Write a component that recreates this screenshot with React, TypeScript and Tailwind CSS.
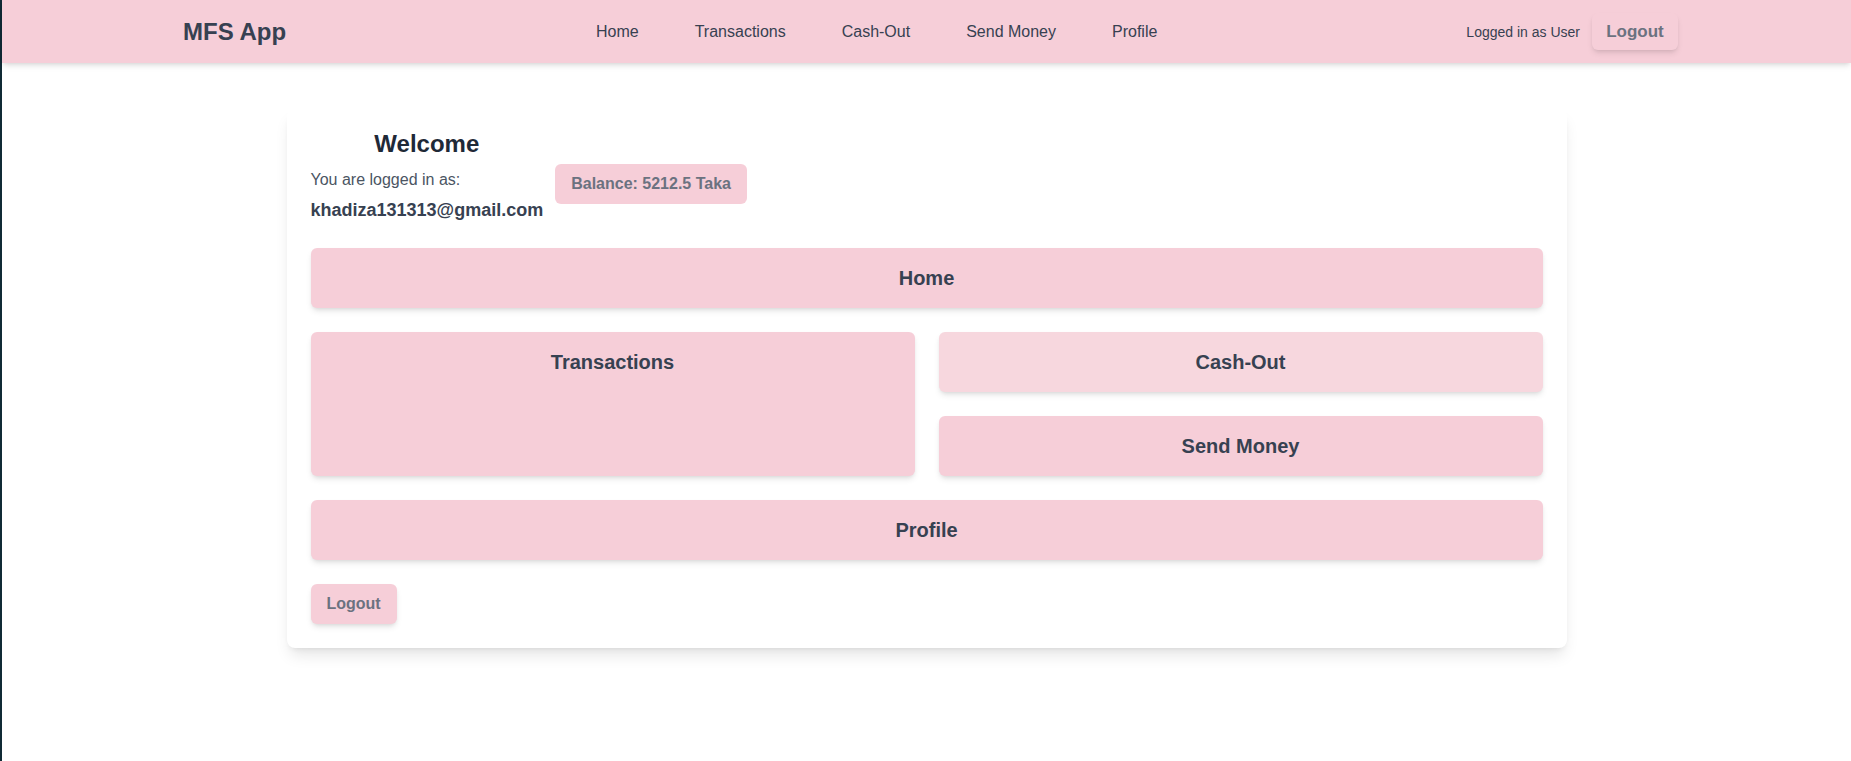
import React from "react";

const PINK = "bg-[#f6ced8]";

function Tile({ label, className = "" }: { label: string; className?: string }) {
  return (
    <div
      className={`rounded-md shadow-md py-4 text-center text-xl font-bold text-[#374151] ${className}`}
    >
      {label}
    </div>
  );
}

export default function App() {
  return (
    <div
      className="flex min-h-[761px] w-full bg-white"
      style={{ fontFamily: '"Liberation Sans", Arial, sans-serif' }}
    >
      <div className="w-[2px] shrink-0 bg-[#102a35]" />
      <div className="flex-1 flex flex-col">
        <nav className={`${PINK} h-[63px] shadow-md flex items-center pl-[181px] pr-[173px]`}>
          <div className="w-[413px] text-2xl font-bold text-[#374151]">MFS App</div>
          <div className="flex items-center gap-14 text-base text-[#374151]">
            <span>Home</span>
            <span>Transactions</span>
            <span>Cash-Out</span>
            <span>Send Money</span>
            <span>Profile</span>
          </div>
          <div className="ml-auto flex items-center gap-3">
            <span className="text-sm text-[#374151]">Logged in as User</span>
            <button
              className={`${PINK} h-[37px] w-[86px] rounded-md shadow-md text-[17px] font-bold text-[#6b7280]`}
            >
              Logout
            </button>
          </div>
        </nav>

        <main className="flex justify-center mt-[46px]">
          <div className="w-[1280px] rounded-lg bg-white shadow-lg px-6 pt-[19px] pb-6 flex flex-col gap-6">
            <div className="flex items-start gap-3">
              <div className="flex flex-col">
                <h2 className="text-2xl font-bold text-[#1f2937] text-center mb-2">Welcome</h2>
                <p className="text-base text-[#4b5563]">You are logged in as:</p>
                <p className="text-lg font-bold text-[#374151] mt-1">khadiza131313@gmail.com</p>
              </div>
              <div
                className={`${PINK} mt-[36px] rounded-md px-4 py-2 text-base font-bold text-[#6b7280]`}
              >
                Balance: 5212.5 Taka
              </div>
            </div>

            <Tile label="Home" className={PINK} />

            <div className="grid grid-cols-2 gap-6">
              <Tile label="Transactions" className={PINK} />
              <div className="flex flex-col gap-6">
                <Tile label="Cash-Out" className="bg-[#f7d7de]" />
                <Tile label="Send Money" className={PINK} />
              </div>
            </div>

            <Tile label="Profile" className={PINK} />

            <div>
              <button
                className={`${PINK} h-[40px] w-[86px] rounded-md shadow-md text-base font-bold text-[#6b7280]`}
              >
                Logout
              </button>
            </div>
          </div>
        </main>
      </div>
    </div>
  );
}
